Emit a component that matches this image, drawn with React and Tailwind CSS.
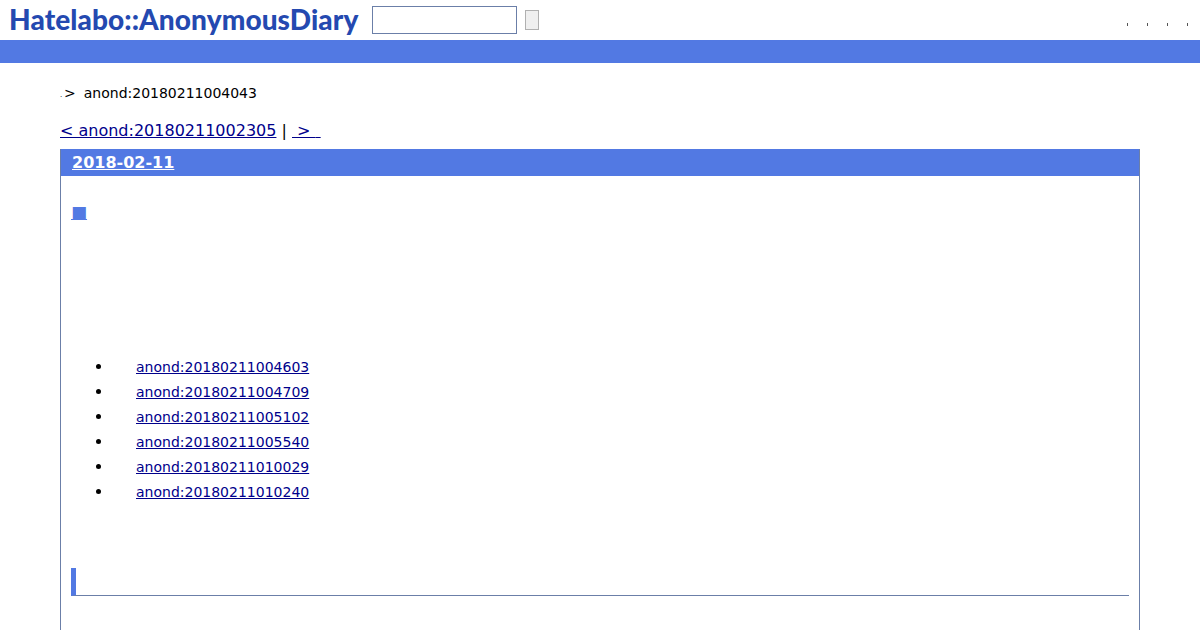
const entries = [
  'anond:20180211004603',
  'anond:20180211004709',
  'anond:20180211005102',
  'anond:20180211005540',
  'anond:20180211010029',
  'anond:20180211010240',
];

const App = () => (
  <div className="h-[630px] overflow-hidden bg-white font-['DejaVu_Sans',sans-serif] text-black">
    <header className="flex h-10 items-center pl-[9px]">
      <h1 className="-mt-[2px] w-[363px] font-['Lato',sans-serif] text-[28px] leading-10 font-black tracking-[0.1px] whitespace-nowrap text-[#2449b0]">
        Hatelabo::AnonymousDiary
      </h1>
      <input className="h-7 w-[145px] border border-[#6b7fa8] bg-white" />
      <button className="ml-2 h-5 w-[14px] border border-[#b0b0b0] bg-[#efefef]" />
      <div className="mt-2 ml-auto flex gap-[19px] pr-3">
        <span className="h-[3px] w-px bg-[#555]" />
        <span className="h-[3px] w-px bg-[#555]" />
        <span className="h-[3px] w-px bg-[#555]" />
        <span className="h-[3px] w-px bg-[#555]" />
      </div>
    </header>
    <div className="h-[23px] bg-[#5279e3]" />

    <main className="px-[60px]">
      <p className="mt-[19px] flex h-[22px] items-center text-sm">
        <span className="mt-[5px] w-[4px] text-[7px] leading-none">.</span>
        <span>&gt;</span>
        <span className="ml-[8px]">anond:20180211004043</span>
      </p>
      <p className="mt-[15px] h-[23px] text-base leading-[23px] whitespace-pre">
        <a href="#" className="text-[#00008b] underline">&lt; anond:20180211002305</a>
        {' | '}
        <a href="#" className="text-[#00008b] underline">{' > '}&nbsp;</a>
      </p>
      <section className="mt-[7px] h-[600px] border-x border-[#6b7fa8]">
        <h2 className="h-[27px] bg-[#5279e3] pl-[11px] text-base leading-[27px] font-bold text-white">
          <a href="#" className="underline">2018-02-11</a>
        </h2>
        <div className="px-[10px]">
          <h3 className="mt-[26px] h-5 text-[17px] leading-5">
            <a href="#" className="text-[#5279e3] underline">■</a>
          </h3>
          <ul className="mt-[132px] list-disc pl-[42px] text-sm leading-[25px] marker:text-[16px] marker:text-black">
            {entries.map((id) => (
              <li key={id} className="h-[25px] pl-[23px]">
                <a href="#" className="text-[#00008b] underline">{id}</a>
              </li>
            ))}
          </ul>
          <h4 className="mt-[64px] h-7 border-b border-l-[5px] border-b-[#6b7fa8] border-l-[#5279e3]" />
        </div>
      </section>
    </main>
  </div>
);

export default App;
